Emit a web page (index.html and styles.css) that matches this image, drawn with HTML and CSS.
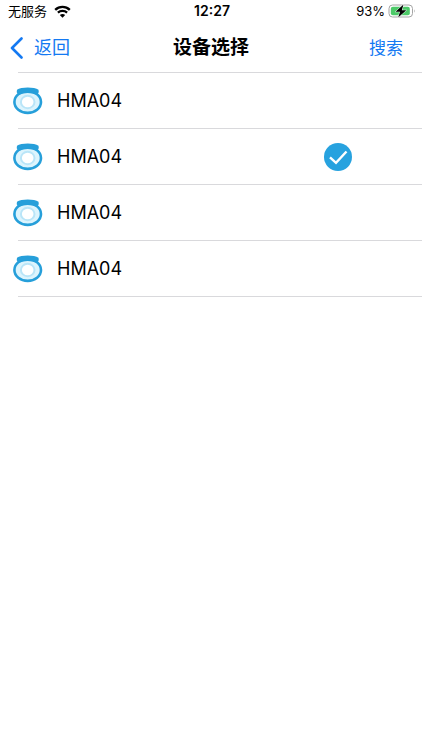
FILE: index.html
```html
<!DOCTYPE html>
<html lang="zh-CN">
<head>
  <meta charset="UTF-8">
  <meta name="viewport" content="width=device-width, initial-scale=1.0">
  <title>设备选择</title>
  <link rel="stylesheet" href="styles.css">
</head>
<body>
  <svg width="0" height="0" class="sprite" aria-hidden="true">
    <symbol id="device" viewBox="0 0 30 30">
      <ellipse cx="14.700" cy="16" rx="13.300" ry="10.900" fill="#dcf4fd" stroke="#269fda" stroke-width="2.600"/>
      <path d="M4 3.800C8 .7 21.500 .7 25.500 3.800L25.800 6.300 24 8.600Q14.700 5.600 5.400 8.600L3.700 6.300Z" fill="#269fda"/>
      <ellipse cx="14.700" cy="16" rx="6.800" ry="6.200" fill="#fff" stroke="#b9e5f8" stroke-width="2"/>
    </symbol>
  </svg>

  <div class="status-bar">
    <div class="status-left">
      <span>无服务</span>
      <svg width="17" height="13" viewBox="0 0 17 13">
        <path d="M1.200 4.900C5.300.900 11.700.900 15.800 4.900M3.900 7.700C6.500 5.300 10.500 5.300 13.100 7.700" fill="none" stroke="#000" stroke-width="2.300"/>
        <path d="M5.800 9.900Q8.500 7.900 11.200 9.900L8.500 12.700Z"/>
      </svg>
    </div>
    <span class="time">12:27</span>
    <div class="status-right">
      <span>93%</span>
      <svg width="28" height="16" viewBox="0 0 28 16">
        <rect x="1" y="2" width="23.500" height="12" rx="3.500" fill="#fff" stroke="#a5a5a5"/>
        <rect x="2.800" y="3.800" width="19" height="8.400" rx="2" fill="#4cca68"/>
        <path d="M26 6.200Q27.500 8 26 9.800Z" fill="#a5a5a5"/>
        <path d="M15.500 1.500 7.500 8.700H12L10.200 14.500 18.300 7.300H13.800Z" stroke="#fff" stroke-width="1" paint-order="stroke"/>
      </svg>
    </div>
  </div>

  <header class="nav-bar">
    <button class="nav-button back">
      <svg width="13" height="22" viewBox="0 0 13 22">
        <path d="M11.500 1.500 2 11 11.500 20.500" fill="none" stroke="#1479f2" stroke-width="2.600" stroke-linecap="round" stroke-linejoin="round"/>
      </svg>
      <span>返回</span>
    </button>
    <h1>设备选择</h1>
    <button class="nav-button search">搜索</button>
  </header>

  <main>
    <ul class="device-list">
      <li>
        <button class="device">
          <svg class="device-icon"><use href="#device"/></svg>
          <span>HMA04</span>
        </button>
      </li>
      <li>
        <button class="device" aria-pressed="true">
          <svg class="device-icon"><use href="#device"/></svg>
          <span>HMA04</span>
          <svg class="check" viewBox="0 0 28 28">
            <circle cx="14" cy="14" r="14" fill="#27a2df"/>
            <path d="M6 14.300 12 19.800 22.500 8.500" fill="none" stroke="#fff" stroke-width="2.400"/>
          </svg>
        </button>
      </li>
      <li>
        <button class="device">
          <svg class="device-icon"><use href="#device"/></svg>
          <span>HMA04</span>
        </button>
      </li>
      <li>
        <button class="device">
          <svg class="device-icon"><use href="#device"/></svg>
          <span>HMA04</span>
        </button>
      </li>
    </ul>
  </main>
</body>
</html>
```
FILE: styles.css
```css
* {
  box-sizing: border-box;
}
body {
  font-family: Inter, "Noto Sans CJK SC", sans-serif;
  background-color: #fff;
  color: #000;
  margin: 0;
}
button {
  font: inherit;
  color: inherit;
  background: none;
  border: none;
  padding: 0;
  cursor: pointer;
}
svg {
  display: block;
  flex: none;
}
.sprite {
  position: absolute;
}
.status-bar,
.nav-bar {
  display: grid;
  grid-template-columns: 1fr auto 1fr;
  align-items: center;
}
.status-bar {
  height: 22px;
  padding: 0 6px 0 8px;
  font-size: 13px;
  line-height: 20px;
}
.status-left,
.status-right {
  display: flex;
  align-items: center;
  gap: 7px;
}
.status-right {
  justify-content: flex-end;
  gap: 3px;
}
.time {
  font-size: 14px;
  font-weight: 600;
}
.nav-bar {
  height: 50px;
  padding: 2px 19px 0 10px;
}
.nav-bar h1 {
  margin: 0;
  padding-left: 9px;
  font-size: 19px;
  font-weight: 700;
  line-height: 28px;
}
.nav-button {
  color: #1479f2;
  font-size: 17px;
  line-height: 28px;
}
.back {
  display: flex;
  align-items: center;
  justify-self: start;
  gap: 11px;
  font-size: 18px;
}
.search {
  justify-self: end;
}
.device-list {
  list-style: none;
  margin: 0;
  padding: 0;
}
.device-list li {
  background: linear-gradient(#d9d9dc, #d9d9dc) 18px 100% / 100% 1px no-repeat;
}
.device-list::before {
  content: "";
  display: block;
  height: 1px;
  margin-left: 18px;
  background-color: #d9d9dc;
}
.device {
  display: flex;
  align-items: center;
  width: 100%;
  height: 56px;
  padding: 0 70px 0 13px;
  font-size: 18px;
  line-height: 24px;
}
.device-icon {
  width: 30px;
  height: 30px;
  margin-right: 14px;
}
.check {
  width: 28px;
  height: 28px;
  margin-left: auto;
}
```
